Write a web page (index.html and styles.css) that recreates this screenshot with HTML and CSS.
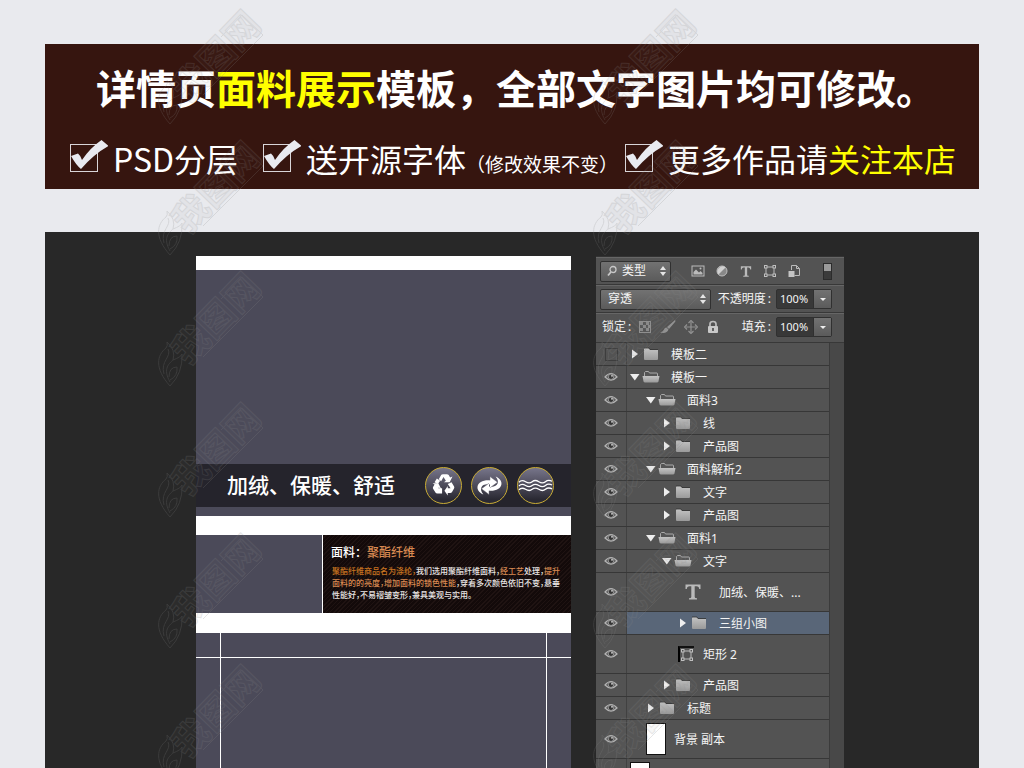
FILE: index.html
```html
<!DOCTYPE html>
<html lang="zh-CN">
<head>
<meta charset="utf-8">
<title>详情页面料展示模板</title>
<link rel="stylesheet" href="styles.css">
</head>
<body>
<svg class="sprite" aria-hidden="true">
  <defs>
    <linearGradient id="folderFill" x1="0" y1="0" x2="0" y2="1"><stop offset="0" stop-color="#c4c4c4"/><stop offset="1" stop-color="#9a9a9a"/></linearGradient>
    <symbol id="check" viewBox="0 0 38 34">
      <rect x="0.5" y="5.500" width="27" height="27" fill="none" stroke="#d9d5d8"/>
      <path d="M1 17 L8 14.500 Q11 17 12 21 Q20 9 31.500 1 L38.500 7 Q24 15 11 30 Q6 26 1 17Z" fill="#e9eaf0"/>
    </symbol>
    <symbol id="eye" viewBox="0 0 14 10">
      <path d="M1 5 Q7 -2 13 5 Q7 11 1 5Z" fill="#5c5c5c" stroke="#b4b4b4" stroke-width="1.200"/>
      <circle cx="7" cy="4.800" r="2.700" fill="#353535" stroke="#a9a9a9" stroke-width=".8"/><circle cx="8" cy="3.800" r=".9" fill="#ddd"/>
    </symbol>
    <symbol id="right" viewBox="0 0 12 12"><path d="M3 1.500 L9 6 L3 10.500Z" fill="#eee"/></symbol>
    <symbol id="down" viewBox="0 0 12 12"><path d="M1 3 H10.500 L5.800 9.500Z" fill="#eee"/></symbol>
    <symbol id="closed" viewBox="0 0 18 14">
      <path d="M2 2 Q2 1 3 1 H6 Q7 1 7.500 2 L8 3 H16 V12 Q16 13 15 13 H3 Q2 13 2 12Z" fill="url(#folderFill)"/>
      <path d="M2 1 H7 L8 2.500 H16" fill="none" stroke="#333" stroke-width=".8"/>
    </symbol>
    <symbol id="open" viewBox="0 0 18 14">
      <path d="M2.500 6 V2.500 L3.500 1.500 H6.500 L7.500 3 H15 Q15.500 3 15.500 4 V6" fill="#555" stroke="#ababab"/>
      <path d="M0.500 6 H17.500 L16.500 11.500 Q16 12.500 15 12.500 H3 Q2 12.500 1.500 11.500Z" fill="url(#folderFill)"/>
    </symbol>
    <symbol id="type" viewBox="0 0 16 16"><path d="M0.500 0.500 H15.500 V5 H14.200 Q14 2.300 11.500 2.300 H9.700 V13 Q9.700 14.300 12 14.300 V15.500 H4 V14.300 Q6.300 14.300 6.300 13 V2.300 H4.500 Q2 2.300 1.800 5 H.5Z" fill="#bababa"/></symbol>
    <symbol id="shape" viewBox="0 0 14 14"><path d="M3 3 H11 M3 11 H11 M3 3 V11 M11 3 V11" fill="none" stroke="#bcbcbc"/><g fill="#535353" stroke="#c0c0c0"><rect x="1.500" y="1.500" width="2.500" height="2.500"/><rect x="10" y="1.500" width="2.500" height="2.500"/><rect x="1.500" y="10" width="2.500" height="2.500"/><rect x="10" y="10" width="2.500" height="2.500"/></g></symbol>
    <symbol id="mark" viewBox="0 0 107 120">
      <g fill="none" stroke-width="1">
        <path d="M13 117 C-3 99 0 86 9 79 Q11 77 10 73 Q19 81 16 91 Q24 88 25 85 Q26 104 13 117Z M13 113 C5 99 13 94 16 91 M7 105 C3 92 15 88 11 80 M13 111 Q21 107 20 98 Q12 98 12 108"/>
        <path d="M64 30 L85 8 L106 28 L46 88"/>
      </g>
      <text class="mark-text" transform="translate(34 74) rotate(-46)" x="-19" y="14">我图网</text>
    </symbol>
  </defs>
</svg>

<main class="page">
  <header class="banner">
    <h1 class="banner-title">详情页<em>面料展示</em>模板，全部文字图片均可修改。</h1>
    <ul class="features">
      <li><svg class="check"><use href="#check"/></svg><span>PSD分层</span></li>
      <li class="feature-fonts"><svg class="check"><use href="#check"/></svg><span>送开源字体<small>（修改效果不变）</small></span></li>
      <li class="feature-more"><svg class="check"><use href="#check"/></svg><span>更多作品请<em>关注本店</em></span></li>
    </ul>
  </header>

  <section class="stage">
    <article class="artboard">
      <div class="hero"></div>
      <div class="hero-bar">
        <h2>加绒、保暖、舒适</h2>
        <div class="badges">
          <span class="badge"><svg viewBox="0 0 37 37"><g fill="#fff"><path d="M13.500 12 L16 7.500 Q16.500 6.500 18 6.500 H22 Q23.500 6.500 24 7.500 L25.500 10 L28 9 L25 15 H19 L21 13.500 L18.500 9.500 L16 14Z"/><path d="M27 15 L29.700 19.500 Q30.300 21 29.500 22 L27.500 25.500 Q27 26.500 25.500 26.500 H23 V29 L19.500 24 L23 19 V21.500 H26 L23 17Z"/><path d="M17 21.500 V27 H12 Q10.500 27 10 26 L7.500 22 Q7 21 7.500 20 L9 17.500 L7 16 H13 L16 22 L13.500 20.500 L13 21.500Z"/><path d="M9 15 L11.500 11 L15 13.500 L12.500 17 Z"/></g></svg></span>
          <span class="badge"><svg viewBox="0 0 37 37"><g fill="#fff"><path d="M12 28 C2 24 4 12 19 13 V9 L27 15 L19 21 V17.500 C10 16 7 22 12 28Z"/><path d="M25 9 C35 13 33 25 18 24 V28 L10 22 L18 16 V19.500 C27 21 30 15 25 9Z"/></g><path d="M19 13 V9 L27 15 L19 21 M18 24 V28 L10 22 L18 16" fill="none" stroke="#65636f" stroke-width=".5"/></svg></span>
          <span class="badge"><svg viewBox="0 0 37 37"><g fill="none" stroke="#fff" stroke-width="1.400"><path d="M1 15 Q4 12 8 14.500 T15 14.500 T22 14.500 T29 14.500 T36 14"/><path d="M1 19 Q4 16 8 18.500 T15 18.500 T22 18.500 T29 18.500 T36 18"/><path d="M1 23 Q4 20 8 22.500 T15 22.500 T22 22.500 T29 22.500 T36 22"/></g></svg></span>
        </div>
      </div>
      <div class="hero-foot"></div>
      <section class="fabric">
        <div class="fabric-photo"></div>
        <div class="fabric-info">
          <h3>面料：<em>聚酯纤维</em></h3>
          <p><b>聚酯纤维商品名为涤纶，</b>我们选用聚酯纤维面料，<em>经工艺</em>处理，<em>提升</em><br><em>面料的的亮度，增加面料的锁色性能</em>，穿着多次颜色依旧不变，悬垂<br>性能好，不易褶皱变形，兼具美观与实用。</p>
        </div>
      </section>
      <div class="guides"><i></i><i></i><i></i><i></i><i></i><i></i></div>
    </article>

    <aside class="panel">
      <div class="tools filter-row">
        <label class="picker kind"><svg class="search" viewBox="0 0 12 12"><circle cx="7" cy="4.500" r="3" fill="none" stroke="#c8c8c8" stroke-width="1.300"/><path d="M5 7 L2 10.500" stroke="#c8c8c8" stroke-width="1.800"/></svg><select aria-label="筛选类型"><option>类型</option></select><svg class="updown" viewBox="0 0 8 12"><path d="M1 5 L4 1 L7 5Z M1 7 L4 11 L7 7Z" fill="#e5e5e5"/></svg></label>
        <div class="filters">
          <button aria-label="像素图层"><svg viewBox="0 0 14 14"><rect x="1" y="2" width="12" height="10" fill="#555" stroke="#bbb"/><path d="M2.500 10.500 V8 L5 5.500 L8 8.500 L9.500 7 L11.500 9 V10.500Z" fill="#bbb"/><circle cx="9.500" cy="4.500" r="1" fill="#bbb"/></svg></button>
          <button aria-label="调整图层"><svg viewBox="0 0 14 14"><circle cx="7" cy="7" r="5" fill="#888" stroke="#bdbdbd"/><path d="M3.500 10.500 A5 5 0 0 1 10.500 3.500Z" fill="#d0d0d0"/></svg></button>
          <button aria-label="文字图层"><svg class="small-t"><use href="#type"/></svg></button>
          <button aria-label="形状图层"><svg><use href="#shape"/></svg></button>
          <button aria-label="智能对象"><svg viewBox="0 0 14 14"><path d="M4.500 6 V1.500 H9.500 L12.500 4.500 V11.500 H7.500 M9.500 1.500 V4.500 H12.500" fill="none" stroke="#bbb"/><rect x="1.500" y="7" width="6" height="6" fill="#c4c4c4"/></svg></button>
        </div>
        <button class="toggle" aria-label="图层过滤开关"><i></i></button>
      </div>
      <div class="tools">
        <label class="picker blend"><select aria-label="混合模式"><option>穿透</option></select><svg class="updown" viewBox="0 0 8 12"><path d="M1 5 L4 1 L7 5Z M1 7 L4 11 L7 7Z" fill="#e5e5e5"/></svg></label>
        <label class="amount-label" for="opacity">不透明度<span>:</span></label>
        <div class="amount"><input id="opacity" value="100%"><button aria-label="调整不透明度"></button></div>
      </div>
      <div class="tools lock-row">
        <span class="lock-label">锁定<span>:</span></span>
        <div class="locks">
          <button aria-label="锁定透明像素"><svg viewBox="0 0 14 14"><rect x="1.500" y="1.500" width="11" height="11" fill="#555" stroke="#909090"/><path d="M2 2h3v3h-3z M8 2h3v3h-3z M5 5h3v3h-3z M10 5h2v3h-2z M2 8h3v3h-3z M8 8h3v3h-3z" fill="#8b8b8b"/></svg></button>
          <button aria-label="锁定图像像素"><svg class="brush" viewBox="0 0 16 14"><path d="M15 0 Q16 1 15 2 L9 9 L7 7Z M6.500 7.500 L8.500 9.500 Q7 14 0 12.500 Q3.500 11.500 4 9.500 Q4.500 7.500 6.500 7.500Z" fill="#929292"/></svg></button>
          <button aria-label="锁定位置"><svg viewBox="0 0 14 14"><path d="M7 2 V12 M2 7 H12" stroke="#929292" stroke-width="1.200"/><path d="M4.500 3 L7 .5 L9.500 3 M4.500 11 L7 13.500 L9.500 11 M3 4.500 L.5 7 L3 9.500 M11 4.500 L13.500 7 L11 9.500" fill="none" stroke="#929292" stroke-width="1.200"/></svg></button>
          <button aria-label="锁定全部"><svg viewBox="0 0 14 14"><path d="M4 6 V4 Q4 1.500 7 1.500 T10 4 V6" fill="none" stroke="#bdbdbd" stroke-width="1.700"/><rect x="2" y="6" width="10" height="7" rx="1" fill="#c8c8c8"/><path d="M7 8V11" stroke="#555" stroke-width="1.800"/></svg></button>
        </div>
        <label class="amount-label" for="fill">填充<span>:</span></label>
        <div class="amount"><input id="fill" value="100%"><button aria-label="调整填充"></button></div>
      </div>

      <div class="list-wrap">
        <ul class="layers">
          <li class="l0"><button class="eye" aria-label="显示图层"><i class="hidden-box"></i></button><div><svg class="arrow"><use href="#right"/></svg><svg class="folder"><use href="#closed"/></svg><span>模板二</span></div></li>
          <li class="l0"><button class="eye" aria-label="隐藏图层"><svg><use href="#eye"/></svg></button><div><svg class="arrow"><use href="#down"/></svg><svg class="folder"><use href="#open"/></svg><span>模板一</span></div></li>
          <li class="l1"><button class="eye" aria-label="隐藏图层"><svg><use href="#eye"/></svg></button><div><svg class="arrow"><use href="#down"/></svg><svg class="folder"><use href="#open"/></svg><span>面料3</span></div></li>
          <li class="l2"><button class="eye" aria-label="隐藏图层"><svg><use href="#eye"/></svg></button><div><svg class="arrow"><use href="#right"/></svg><svg class="folder"><use href="#closed"/></svg><span>线</span></div></li>
          <li class="l2"><button class="eye" aria-label="隐藏图层"><svg><use href="#eye"/></svg></button><div><svg class="arrow"><use href="#right"/></svg><svg class="folder"><use href="#closed"/></svg><span>产品图</span></div></li>
          <li class="l1"><button class="eye" aria-label="隐藏图层"><svg><use href="#eye"/></svg></button><div><svg class="arrow"><use href="#down"/></svg><svg class="folder"><use href="#open"/></svg><span>面料解析2</span></div></li>
          <li class="l2"><button class="eye" aria-label="隐藏图层"><svg><use href="#eye"/></svg></button><div><svg class="arrow"><use href="#right"/></svg><svg class="folder"><use href="#closed"/></svg><span>文字</span></div></li>
          <li class="l2"><button class="eye" aria-label="隐藏图层"><svg><use href="#eye"/></svg></button><div><svg class="arrow"><use href="#right"/></svg><svg class="folder"><use href="#closed"/></svg><span>产品图</span></div></li>
          <li class="l1"><button class="eye" aria-label="隐藏图层"><svg><use href="#eye"/></svg></button><div><svg class="arrow"><use href="#down"/></svg><svg class="folder"><use href="#open"/></svg><span>面料1</span></div></li>
          <li class="l2"><button class="eye" aria-label="隐藏图层"><svg><use href="#eye"/></svg></button><div><svg class="arrow"><use href="#down"/></svg><svg class="folder"><use href="#open"/></svg><span>文字</span></div></li>
          <li class="tall text-layer"><button class="eye" aria-label="隐藏图层"><svg><use href="#eye"/></svg></button><div><svg class="type-icon"><use href="#type"/></svg><span>加绒、保暖、...</span></div></li>
          <li class="l3 selected"><button class="eye" aria-label="隐藏图层"><svg><use href="#eye"/></svg></button><div><svg class="arrow"><use href="#right"/></svg><svg class="folder"><use href="#closed"/></svg><span>三组小图</span></div></li>
          <li class="tall shape-layer"><button class="eye" aria-label="隐藏图层"><svg><use href="#eye"/></svg></button><div><i class="shape-thumb"><svg><use href="#shape"/></svg></i><span>矩形 2</span></div></li>
          <li class="l2"><button class="eye" aria-label="隐藏图层"><svg><use href="#eye"/></svg></button><div><svg class="arrow"><use href="#right"/></svg><svg class="folder"><use href="#closed"/></svg><span>产品图</span></div></li>
          <li class="l1"><button class="eye" aria-label="隐藏图层"><svg><use href="#eye"/></svg></button><div><svg class="arrow"><use href="#right"/></svg><svg class="folder"><use href="#closed"/></svg><span>标题</span></div></li>
          <li class="tall l1"><button class="eye" aria-label="隐藏图层"><svg><use href="#eye"/></svg></button><div><i class="thumb"></i><span>背景 副本</span></div></li>
          <li class="tall l0"><button class="eye" aria-label="显示图层"></button><div><i class="thumb"></i></div></li>
        </ul>
        <div class="track"></div>
      </div>
    </aside>
  </section>
</main>

<div class="marks" aria-hidden="true">
  <svg><use href="#mark"/></svg><svg><use href="#mark"/></svg>
  <svg><use href="#mark"/></svg><svg><use href="#mark"/></svg>
  <svg><use href="#mark"/></svg><svg><use href="#mark"/></svg>
  <svg><use href="#mark"/></svg><svg><use href="#mark"/></svg>
  <svg><use href="#mark"/></svg><svg><use href="#mark"/></svg>
  <svg><use href="#mark"/></svg><svg><use href="#mark"/></svg>
</div>
</body>
</html>
```
FILE: styles.css
```css
* { box-sizing: border-box; }
body {
  margin: 0;
  background: #e9eaee;
  font-family: "Noto Sans CJK SC", "Noto Sans", sans-serif;
  height: 100vh;
  overflow: hidden;
  position: relative;
}
h1, h2, h3, p, ul { margin: 0; padding: 0; }
ul { list-style: none; }
em, i { font-style: normal; }
svg { display: block; flex: none; }
button, input, select { font: inherit; color: inherit; margin: 0; padding: 0; border: 0; background: none; border-radius: 0; }
.sprite { position: absolute; width: 0; height: 0; }

.page { display: flex; flex-direction: column; gap: 43px; height: 100%; padding: 44px 45px 0; }

.banner { flex: none; background: #36150f; color: #fff; padding: 13px 22px 7px 25px; }
.banner em { color: #ff0; }
.banner-title { font-size: 40px; line-height: 60px; font-weight: 700; padding-left: 26px; white-space: nowrap; }
.features { display: flex; margin-top: 17px; font-size: 32px; line-height: 48px; white-space: nowrap; }
.features li { display: flex; align-items: center; gap: 5px; }
.features small { font-size: 19px; line-height: 20px; }
.feature-fonts { margin-left: 25px; }
.feature-more { margin-left: 7px; }
.check { width: 38px; height: 34px; margin-bottom: 4px; overflow: visible; }

.stage { flex: 1; min-height: 0; display: flex; gap: 25px; padding: 24px 135px 0 151px; background: #282828; overflow: hidden; }
.artboard { flex: 1; min-width: 0; display: flex; flex-direction: column; background: #fff; padding-top: 14px; }
.hero { height: 194px; background: #4b4a59; }
.hero-bar { height: 43px; background: #25242c; display: flex; align-items: center; justify-content: space-between; padding: 0 17px 0 31px; color: #fff; }
.hero-bar h2 { font-size: 21px; font-weight: 500; line-height: 32px; padding-bottom: 3px; white-space: nowrap; }
.hero-foot { height: 9px; background: #4b4a59; }
.badges { display: flex; gap: 9px; }
.badge { width: 37px; height: 37px; border-radius: 50%; border: 1px solid #c9ac35; background: linear-gradient(#77758a, #2a2933 90%); }
.badge svg { width: 35px; height: 35px; }

.fabric { display: grid; grid-template-columns: 126px 1fr; gap: 1px; margin: 19px 0 20px; height: 78px; }
.fabric-photo { background: #4b4a59; }
.fabric-info { padding: 8px 0 0 8px; color: #e9e5e4; background: repeating-linear-gradient(135deg, #130a0a 0 2px, #1f1312 2px 3px); white-space: nowrap; }
.fabric-info h3 { font-size: 12px; line-height: 18px; font-weight: 500; color: #fff; }
.fabric-info em { color: #d98a52; }
.fabric-info p { font-size: 8px; line-height: 12px; margin-top: 4px; padding-left: 1px; font-weight: 500; font-feature-settings: "halt"; }
.fabric-info b { font-weight: 500; color: #c87420; }
.guides { flex: 1; display: grid; grid-template-columns: 24px 1fr 24px; grid-template-rows: 24px 1fr; gap: 1px; }
.guides i { background: #4b4a59; }

.panel { flex: none; width: 248px; display: flex; flex-direction: column; background: #535353; color: #f4f4f4; font-family: "Noto Sans", "Noto Sans CJK SC", sans-serif; font-size: 12px; border-top: 1px solid #333; white-space: nowrap; }
.tools { height: 28px; flex: none; display: flex; align-items: center; padding: 0 12px 0 4px; border-bottom: 1px solid #383838; border-top: 1px solid #666; }
.picker { display: flex; align-items: center; height: 21px; border: 1px solid #303030; border-radius: 2px; background: linear-gradient(#727272, #5b5b5b); }
.picker select { appearance: none; flex: 1; min-width: 0; line-height: 18px; }
.kind { width: 71px; padding: 0 3px 0 5px; gap: 4px; }
.blend { width: 111px; padding: 0 3px 0 7px; }
.search { width: 12px; height: 12px; }
.updown { width: 8px; height: 12px; }
.filters { display: flex; gap: 10px; margin-left: 20px; }
.filters svg { width: 14px; height: 14px; }
.filters .small-t { width: 14px; height: 11px; }
.filters button { display: flex; align-items: center; }
.toggle { display: flex; align-items: flex-start; width: 9px; height: 17px; margin-left: auto; background: #3b3b3b; border: 1px solid #2c2c2c; }
.toggle i { flex: 1; height: 7px; background: #9a9a9a; }
.amount-label, .lock-label { display: flex; gap: 2px; line-height: 18px; }
.amount-label { margin-left: auto; margin-right: 5px; }
.amount { display: flex; width: 56px; height: 20px; border: 1px solid #303030; border-radius: 2px; background: #383838; }
.amount input { width: 36px; padding-left: 3px; font-size: 11px; line-height: 18px; }
.amount button { flex: 1; display: flex; align-items: center; justify-content: center; border-left: 1px solid #303030; background: linear-gradient(#727272, #5b5b5b); }
.amount button::after { content: ""; border: 3px solid transparent; border-top-color: #eee; border-bottom: 0; }
.lock-row { height: 30px; padding: 0 12px 2px 6px; }
.locks { display: flex; gap: 8px; margin-left: 7px; }
.locks svg { width: 14px; height: 14px; }
.locks .brush { width: 16px; }

.list-wrap { flex: 1; min-height: 0; display: flex; }
.layers { flex: 1; }
.layers li { display: flex; height: 23px; border-bottom: 1px solid #373737; }
.layers .tall { height: 39px; }
.layers li > div { flex: 1; display: flex; align-items: center; line-height: 18px; }
.layers span { padding-top: 2px; }
.eye { width: 31px; display: flex; align-items: center; justify-content: center; border-right: 1px solid #414141; }
.eye svg { width: 14px; height: 10px; }
.hidden-box { width: 13px; height: 13px; border: 1px solid #3d3d3d; }
.arrow { width: 12px; height: 12px; margin-right: 1px; }
.folder { width: 18px; height: 14px; margin-right: 11px; }
.l0 > div { padding-left: 2px; }
.l1 > div { padding-left: 18px; }
.l2 > div { padding-left: 34px; }
.l3 > div { padding-left: 50px; }
.selected > div { background: #596678; }
.text-layer > div { padding-left: 58px; }
.type-icon { width: 16px; height: 16px; margin-right: 18px; }
.shape-layer > div { padding-left: 51px; }
.shape-thumb { width: 16px; height: 16px; margin-right: 9px; border-left: 2px solid #000; border-top: 2px solid #111; }
.shape-thumb svg { width: 14px; height: 14px; }
.thumb { width: 20px; height: 32px; margin-right: 8px; margin-left: 1px; background: #fff; border: 1px solid #111; }
.track { width: 15px; background: #484848; border-left: 1px solid #3b3b3b; }

.marks { position: absolute; inset: 7px 0 auto 157px; display: grid; grid-template-columns: 107px 107px; column-gap: 328px; grid-auto-rows: 131px; pointer-events: none; }
.marks svg { width: 107px; height: 120px; stroke: #888; opacity: .2; }
.mark-text { font: 700 36px "Noto Sans CJK SC", sans-serif; fill: #777; fill-opacity: .3; stroke-width: 1px; }
```
